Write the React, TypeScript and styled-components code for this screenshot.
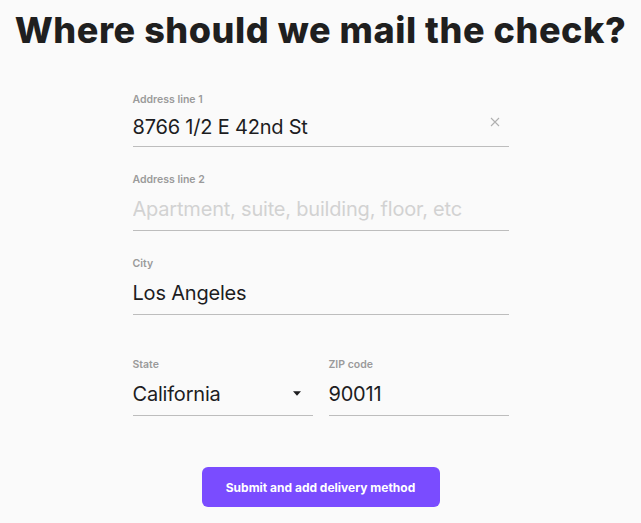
import React from 'react';
import styled, {createGlobalStyle} from 'styled-components';

const GlobalStyle = createGlobalStyle`
  html, body {
    margin: 0;
    padding: 0;
    background: #fafafa;
  }
  body {
    font-family: Inter, "Open Sans", sans-serif;
    color: #1d1d1f;
  }
`

const Page = styled.div`
  width: 641px;
  min-height: 523px;
  display: flex;
  flex-direction: column;
  align-items: center;
  box-sizing: border-box;
  padding-top: 8px;
`

const Title = styled.h1`
  margin: 0;
  font-size: 36px;
  line-height: 44px;
  font-weight: 800;
  letter-spacing: 0.55px;
  color: #1f1f1f;
  white-space: nowrap;
`

const Form = styled.form`
  width: 376px;
  margin-top: 41px;
  display: flex;
  flex-direction: column;
  gap: 26px;
`

const Row = styled.div`
  display: grid;
  grid-template-columns: 180px 180px;
  gap: 16px;
  margin-top: 17px;
`

const Field = styled.label`
  display: flex;
  flex-direction: column;
  border-bottom: 1px solid #bdbdbd;
`

const Label = styled.span`
  font-size: 10.5px;
  line-height: 14px;
  font-weight: 600;
  color: #9a9a9a;
`

const InputWrap = styled.div<{$compact?: boolean}>`
  height: ${p => (p.$compact ? 39 : 43)}px;
  display: flex;
  align-items: center;
`

const Input = styled.input`
  flex: 1;
  min-width: 0;
  border: none;
  outline: none;
  background: transparent;
  padding: 0;
  font-family: inherit;
  font-size: 20px;
  letter-spacing: -0.2px;
  color: #1d1d1f;
  &::placeholder {
    color: #d2d2d2;
  }
`

const IconButton = styled.span<{$right: number; $lift?: number}>`
  width: 20px;
  margin-right: ${p => p.$right}px;
  margin-bottom: ${p => (p.$lift || 0) * 2}px;
  display: flex;
  justify-content: center;
  align-items: center;
  color: #b0b0b0;
`

const Submit = styled.button`
  align-self: center;
  margin-top: 25px;
  width: 238px;
  height: 40px;
  border: none;
  border-radius: 6px;
  background: #7a4cff;
  color: #fff;
  font-family: inherit;
  font-size: 12px;
  font-weight: 700;
`

const ClearIcon = () => (
  <svg width="10" height="10" viewBox="0 0 10 10">
    <path d="M1 1L9 9M9 1L1 9" stroke="currentColor" strokeWidth="1.1" />
  </svg>
)

const Caret = () => (
  <svg width="8" height="5" viewBox="0 0 8 5">
    <path d="M0 0.3H8L4 4.8Z" fill="#1d1d1f" />
  </svg>
)

const App: React.FC = () => {
  return (
    <Page>
      <GlobalStyle />
      <Title>Where should we mail the check?</Title>
      <Form onSubmit={e => e.preventDefault()}>
        <Field>
          <Label>Address line 1</Label>
          <InputWrap $compact>
            <Input defaultValue="8766 1/2 E 42nd St" />
            <IconButton $right={4} $lift={5}><ClearIcon /></IconButton>
          </InputWrap>
        </Field>
        <Field>
          <Label>Address line 2</Label>
          <InputWrap>
            <Input placeholder="Apartment, suite, building, floor, etc" />
          </InputWrap>
        </Field>
        <Field>
          <Label>City</Label>
          <InputWrap>
            <Input defaultValue="Los Angeles" />
          </InputWrap>
        </Field>
        <Row>
          <Field>
            <Label>State</Label>
            <InputWrap>
              <Input defaultValue="California" readOnly />
              <IconButton $right={6}><Caret /></IconButton>
            </InputWrap>
          </Field>
          <Field>
            <Label>ZIP code</Label>
            <InputWrap>
              <Input defaultValue="90011" />
            </InputWrap>
          </Field>
        </Row>
        <Submit type="submit">Submit and add delivery method</Submit>
      </Form>
    </Page>
  )
}

export default App;
